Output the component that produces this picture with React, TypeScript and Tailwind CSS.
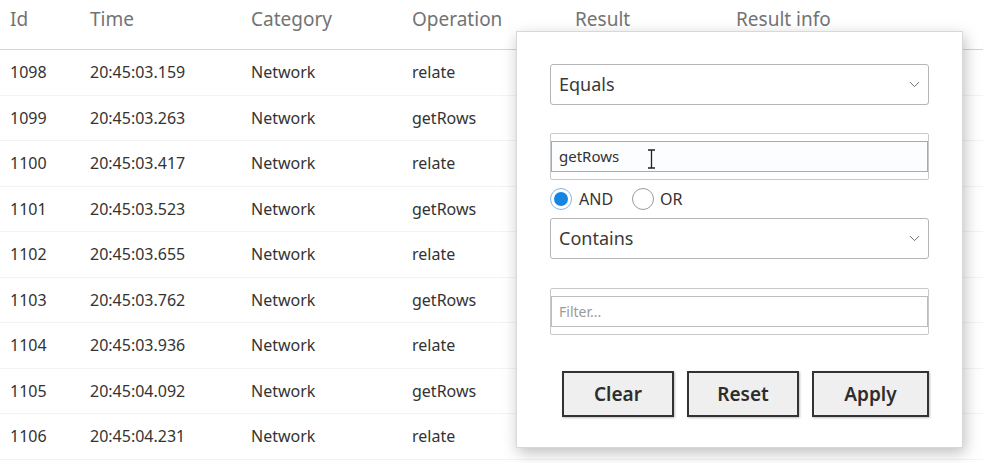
import { ChevronDown } from "lucide-react";

const ROWS = [
  { id: 1098, time: "20:45:03.159", op: "relate" },
  { id: 1099, time: "20:45:03.263", op: "getRows" },
  { id: 1100, time: "20:45:03.417", op: "relate" },
  { id: 1101, time: "20:45:03.523", op: "getRows" },
  { id: 1102, time: "20:45:03.655", op: "relate" },
  { id: 1103, time: "20:45:03.762", op: "getRows" },
  { id: 1104, time: "20:45:03.936", op: "relate" },
  { id: 1105, time: "20:45:04.092", op: "getRows" },
  { id: 1106, time: "20:45:04.231", op: "relate" },
];

const COLS = "grid grid-cols-[80px_161px_161px_163px_161px_1fr] pl-[10px]";

function Select({ value }: { value: string }) {
  return (
    <div className="flex items-center justify-between h-[41px] w-full border border-[#b5b5b5] rounded-[3px] pl-[8px] pr-[5px] bg-white">
      <span className="text-[18px] text-[#3a3a3a]">{value}</span>
      <ChevronDown size={17} strokeWidth={1.4} className="text-[#6a6a6a]" />
    </div>
  );
}

function TextBox({ value, placeholder, focused }: { value?: string; placeholder?: string; focused?: boolean }) {
  return (
    <div className="flex items-center h-[47px] w-full border border-[#c9c9c9] rounded-[2px]">
      <div
        className={`relative flex items-center h-[31px] w-full border px-[7px] ${
          focused ? "border-[#8fb0d6] bg-[#fbfdff]" : "border-[#bdbdbd] bg-white"
        }`}
      >
        {value ? (
          <span className="text-[15px] text-[#333]">{value}</span>
        ) : (
          <span className="text-[14px] text-[#9a9a9a]">{placeholder}</span>
        )}
        {focused && (
          <svg className="absolute left-[95px] top-[7px]" width="9" height="20" viewBox="0 0 9 20">
            <path d="M1 1h7M4.5 1v18M1 19h7" stroke="#222" strokeWidth="1.3" fill="none" />
          </svg>
        )}
      </div>
    </div>
  );
}

export default function App() {
  return (
    <div
      className="relative w-[983px] h-[463px] overflow-hidden bg-white"
      style={{ fontFamily: '"Noto Sans", "Open Sans", sans-serif' }}
    >
      {/* table */}
      <div className={`${COLS} h-[50px] pt-[5px] border-b border-[#d4d4d4] text-[19px] text-[#737373]`}>
        <div>Id</div>
        <div>Time</div>
        <div>Category</div>
        <div>Operation</div>
        <div>Result</div>
        <div>Result info</div>
      </div>
      {ROWS.map((r) => (
        <div key={r.id} className={`${COLS} h-[45.5px] items-center border-b border-[#f3f3f3] text-[16px] text-[#333]`}>
          <div>{r.id}</div>
          <div>{r.time}</div>
          <div>Network</div>
          <div>{r.op}</div>
          <div></div>
          <div></div>
        </div>
      ))}

      {/* filter popup */}
      <div className="absolute left-[516px] top-[31px] w-[447px] h-[417px] bg-white border border-[#d8d8d8] shadow-[2px_5px_14px_rgba(0,0,0,0.25)] pt-[32px] px-[33px]">
        <Select value="Equals" />
        <div className="mt-[28px]">
          <TextBox value="getRows" focused />
        </div>
        <div className="flex items-center h-[38px] text-[16px] text-[#333]">
          <div className="flex items-center justify-center w-[22px] h-[22px] rounded-full border border-[#86b6e6] bg-white">
            <div className="w-[14px] h-[14px] rounded-full bg-[#1585e2]" />
          </div>
          <span className="ml-[7px]">AND</span>
          <div className="ml-[19px] w-[22px] h-[22px] rounded-full border border-[#9a9a9a] bg-white" />
          <span className="ml-[6px]">OR</span>
        </div>
        <Select value="Contains" />
        <div className="mt-[29px]">
          <TextBox placeholder="Filter..." />
        </div>
        <div className="flex mt-[36px] ml-[12px] gap-[13px]">
          {[
            { label: "Clear", w: "w-[112px]" },
            { label: "Reset", w: "w-[112px]" },
            { label: "Apply", w: "w-[117px]" },
          ].map((b) => (
            <button
              key={b.label}
              className={`${b.w} h-[46px] border-2 border-[#333] bg-[#efefef] text-[19px] font-semibold text-[#2d2d2d] shadow-[1px_1px_2px_rgba(0,0,0,0.25)]`}
            >
              {b.label}
            </button>
          ))}
        </div>
      </div>
    </div>
  );
}
